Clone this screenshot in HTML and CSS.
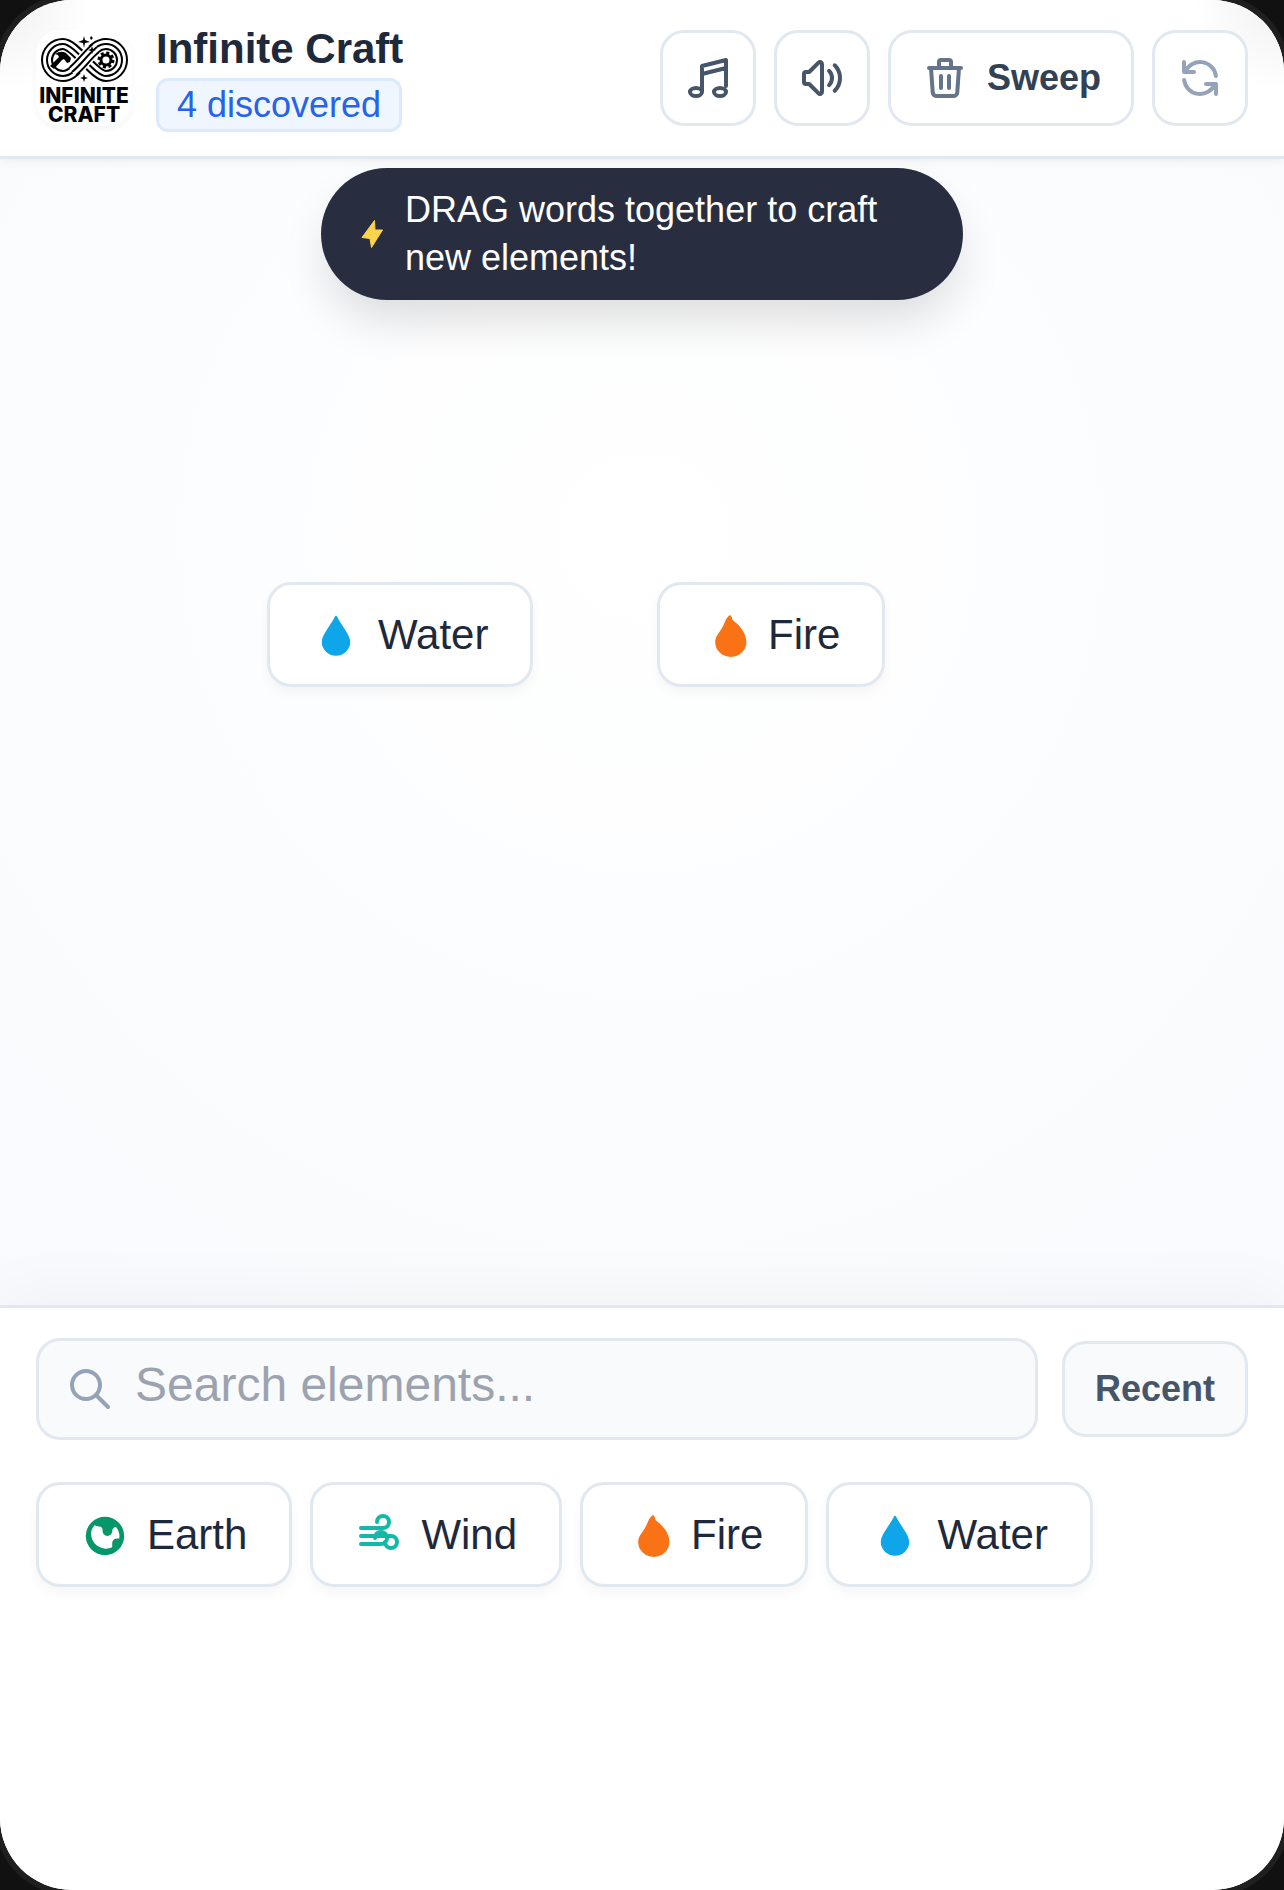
FILE: index.html
```html
<!DOCTYPE html>
<html lang="en">
<head>
    <meta charset="UTF-8">
    <meta name="viewport" content="width=device-width, initial-scale=1.0">
    <title>Infinite Craft</title>
    <link rel="stylesheet" href="styles.css">
</head>
<body>
    <!-- shared element icons -->
    <svg class="sprite" aria-hidden="true">
      <symbol id="icon-water" viewBox="0 0 24 24">
        <path fill="#0ea5e9" d="M12 1.900C11.700 1.900 11.500 2.200 11.300 2.600C9.500 6.500 4.900 11.300 4.900 14.900a7.100 7 0 0 0 14.200 0C19.100 11.300 14.500 6.500 12.700 2.600C12.500 2.200 12.300 1.900 12 1.900z"/>
      </symbol>
      <symbol id="icon-fire" viewBox="0 0 24 24">
        <path fill="#f97316" d="M13.600 1.700C12.300 2.600 11.700 4.300 10.900 6.300C9.600 9.600 6.600 11.700 6.600 15a7.800 7.500 0 0 0 15.600 0C22.200 10.900 19.200 6.900 15.700 4.400C14.900 3.800 15.200 3 14.700 2.200C14.400 1.600 14 1.500 13.600 1.700z"/>
      </symbol>
      <symbol id="icon-earth" viewBox="0 0 20 20">
        <path fill="#059669" fill-rule="evenodd" d="M10 18a8 8 0 1 0 0-16 8 8 0 0 0 0 16zM4.300 8A6 6 0 0 1 5.700 5.400C6.200 5.800 6.900 6 7.500 6A1.500 1.500 0 0 1 9 7.500V8a2 2 0 0 0 4 0 2 2 0 0 1 1.500-1.900A6 6 0 0 1 16 10c0 .3 0 .7-.1 1H15a2 2 0 0 0-2 2v1.700A5.900 5.900 0 0 1 10 15.300C6.500 14.800 3.700 12 4.300 8z"/>
      </symbol>
      <symbol id="icon-wind" viewBox="0 0 24 24">
        <g fill="none" stroke="#14b8a6" stroke-width="2" stroke-linecap="round" stroke-linejoin="round">
          <path d="M3 8h11a3 3 0 1 0-3-3"/>
          <path d="M3 12h15a3 3 0 1 1-3 3"/>
          <path d="M3 16h10a3 3 0 1 0-3-3"/>
        </g>
      </symbol>
    </svg>

    <div class="app">
      <header class="header">
        <div class="brand">
          <svg class="logo" viewBox="0 0 96 96" role="img" aria-label="Infinite Craft logo">
            <!-- infinity band -->
            <g fill="none">
              <path stroke="#000" stroke-width="12" d="M48 30C56 20 62 14 70 14a16 16 0 0 1 0 32C58 46 39 14 27 14a16 16 0 0 0 0 32C35 46 41 39 48 30"/>
              <path stroke="#fff" stroke-width="8" d="M48 30C56 20 62 14 70 14a16 16 0 0 1 0 32C58 46 39 14 27 14a16 16 0 0 0 0 32C35 46 41 39 48 30"/>
              <path stroke="#000" stroke-width="2" d="M48 30C56 20 62 14 70 14a16 16 0 0 1 0 32C58 46 39 14 27 14a16 16 0 0 0 0 32C35 46 41 39 48 30"/>
              <path stroke="#fff" stroke-width="15" d="M40 39L57 20"/>
              <path stroke="#000" stroke-width="12" d="M37 41C45 35 52 24 60 18"/>
              <path stroke="#fff" stroke-width="8" d="M36 42C45 35 52 24 61 17"/>
              <path stroke="#000" stroke-width="2" d="M36 42C45 35 52 24 61 17"/>
            </g>
            <!-- hammer and gear -->
            <path d="M19 24q6-4 11-1l5 5-1 4-3 1-3-4-2 1-8 9-4-3 9-9-1-2z"/>
            <circle cx="70" cy="30" r="5" fill="none" stroke="#000" stroke-width="3"/>
            <circle cx="70" cy="30" r="7" fill="none" stroke="#000" stroke-width="3" stroke-dasharray="3 2.500"/>
            <path d="M48 6l1 4 5 2-5 1-1 5-1-5-5-1 5-2zM55 6l2 2-2 2-1-2zM56 16l1 3 3 1-3 1-1 3-1-3-3-1 3-1zM48 44l1 3 3 1-3 1-1 3-1-3-3-1 3-1z"/>
            <text class="logo-text" x="48" y="73" text-anchor="middle">INFINITE</text>
            <text class="logo-text" x="48" y="92" text-anchor="middle">CRAFT</text>
          </svg>
          <div class="brand-info">
            <h1>Infinite Craft</h1>
            <span class="count">4 discovered</span>
          </div>
        </div>

        <div class="actions">
          <button type="button" class="btn" aria-label="Music">
            <svg class="icon" viewBox="0 0 24 24"><path d="M9 19V6l12-3v13M9 10l12-3M9 19c0 1.100-1.300 2-3 2s-3-.9-3-2 1.300-2 3-2 3 .9 3 2zM21 19c0 1.100-1.300 2-3 2s-3-.9-3-2 1.300-2 3-2 3 .9 3 2z"/></svg>
          </button>
          <button type="button" class="btn" aria-label="Sound">
            <svg class="icon" viewBox="0 0 24 24"><path d="M15.536 8.464a5 5 0 0 1 0 7.072m2.828-9.900a9 9 0 0 1 0 12.728M5.586 15H4a1 1 0 0 1-1-1v-4a1 1 0 0 1 1-1h1.586l4.707-4.707C10.923 3.663 12 4.109 12 5v14c0 .891-1.077 1.337-1.707.707L5.586 15z"/></svg>
          </button>
          <button type="button" class="btn btn-sweep">
            <svg class="icon" viewBox="0 0 24 24" aria-hidden="true"><path d="M19 7l-.867 12.142A2 2 0 0 1 16.138 21H7.862a2 2 0 0 1-1.995-1.858L5 7m5 4v6m4-6v6m1-10V4a1 1 0 0 0-1-1h-4a1 1 0 0 0-1 1v3M4 7h16"/></svg>
            Sweep
          </button>
          <button type="button" class="btn btn-reset" aria-label="Reset">
            <svg class="icon" viewBox="0 0 24 24"><path d="M4 4v5h.582m15.356 2A8.001 8.001 0 0 0 4.582 9m0 0H9m11 11v-5h-.581m0 0a8.003 8.003 0 0 1-15.357-2m15.357 2H15"/></svg>
          </button>
        </div>
      </header>

      <main class="workspace">
        <div class="hint">
          <svg class="hint-icon" viewBox="0 0 30 30" aria-hidden="true"><path fill="#fcd34d" stroke="#fcd34d" stroke-linejoin="round" d="M17.500 1.500L18 11h7.500L14.500 28.500 13 19.500 5 18.500z"/></svg>
          <p>DRAG words together to craft new elements!</p>
        </div>
        <button type="button" class="element placed placed-water"><svg class="icon"><use href="#icon-water"/></svg>Water</button>
        <button type="button" class="element placed placed-fire"><svg class="icon"><use href="#icon-fire"/></svg>Fire</button>
      </main>

      <section class="panel">
        <div class="search-row">
          <div class="search">
            <label for="search" aria-label="Search elements">
              <svg class="icon" viewBox="0 0 24 24"><path d="M21 21l-6-6m2-5a7 7 0 1 1-14 0 7 7 0 0 1 14 0z"/></svg>
            </label>
            <input type="text" id="search" placeholder="Search elements...">
          </div>
          <button type="button" class="btn btn-sort">Recent</button>
        </div>
        <div class="elements">
          <button type="button" class="element"><svg class="icon"><use href="#icon-earth"/></svg>Earth</button>
          <button type="button" class="element"><svg class="icon"><use href="#icon-wind"/></svg>Wind</button>
          <button type="button" class="element"><svg class="icon"><use href="#icon-fire"/></svg>Fire</button>
          <button type="button" class="element"><svg class="icon"><use href="#icon-water"/></svg>Water</button>
        </div>
      </section>
    </div>
</body>
</html>
```
FILE: styles.css
```css
* {
  box-sizing: border-box;
}

body {
  margin: 0;
  background-color: #111;
  color: #1e293b;
  font-family: "Liberation Sans", Arial, sans-serif;
}

h1,
p {
  margin: 0;
}

button,
input {
  font-family: inherit;
}

button {
  cursor: pointer;
}

.sprite {
  position: absolute;
  width: 0;
  height: 0;
}

.app {
  display: flex;
  flex-direction: column;
  height: 100vh;
  overflow: hidden;
  border-radius: 72px;
  background-color: white;
  box-shadow: 0 0 0 6px #1f1f1f;
}

.icon {
  display: block;
  flex: none;
  width: 48px;
  height: 48px;
  fill: none;
  stroke: currentColor;
  stroke-width: 2;
  stroke-linecap: round;
  stroke-linejoin: round;
}

.element .icon {
  margin-top: 3px;
  stroke: none;
}

/* Header */
.header {
  display: flex;
  align-items: center;
  justify-content: space-between;
  z-index: 1;
  padding: 24px 36px;
  border-bottom: 3px solid #e2e8f0;
  background: radial-gradient(circle at 0 0, #f0f0f0, transparent 90px), radial-gradient(circle at 100% 0, #f0f0f0, transparent 90px), white;
  box-shadow: 0 3px 9px rgba(0, 0, 0, 0.05);
}

.brand {
  display: flex;
  align-items: center;
  gap: 24px;
}

.logo {
  width: 96px;
  height: 96px;
  border-radius: 24px;
  background-color: white;
  box-shadow: 0 3px 6px rgba(0, 0, 0, 0.04);
}

.logo-text {
  font-family: Inter, sans-serif;
  font-size: 21px;
  font-weight: 800;
}

.brand-info {
  display: flex;
  flex-direction: column;
  align-items: flex-start;
  gap: 4px;
}

h1 {
  font-size: 42px;
  line-height: 50px;
}

.count {
  padding: 0 18px;
  border: 3px solid #dbeafe;
  border-radius: 12px;
  background-color: #eff6ff;
  color: #2563eb;
  font-size: 36px;
  line-height: 48px;
}

.actions {
  display: flex;
  gap: 18px;
}

.btn {
  display: flex;
  align-items: center;
  gap: 18px;
  padding: 21px;
  border: 3px solid #e2e8f0;
  border-radius: 24px;
  background-color: white;
  color: #475569;
  font-size: 36px;
  font-weight: bold;
  line-height: 48px;
}

.btn-sweep {
  padding: 21px 30px;
  color: #334155;
}

.btn-sweep .icon {
  color: #64748b;
}

.btn-reset {
  color: #94a3b8;
}

/* Workspace */
.workspace {
  position: relative;
  flex: 1;
  background: radial-gradient(circle at 50% 33%, white, #f8fafd);
}

.hint {
  position: absolute;
  top: 9px;
  left: 25%;
  display: flex;
  align-items: center;
  gap: 18px;
  width: 50%;
  padding: 18px 36px;
  border-radius: 66px;
  background-color: #282e40;
  box-shadow: 0 24px 48px -6px rgba(0, 0, 0, 0.14);
  color: white;
  font-size: 36px;
  line-height: 48px;
}

.hint-icon {
  flex: none;
  width: 30px;
  height: 30px;
}

.element {
  display: flex;
  align-items: center;
  gap: 18px;
  padding: 18px 42px;
  border: 3px solid #e2e8f0;
  border-radius: 24px;
  background-color: white;
  box-shadow: 0 6px 12px rgba(0, 0, 0, 0.04);
  color: #1e293b;
  font-size: 42px;
  line-height: 63px;
}

.placed {
  position: absolute;
  top: 423px;
}

.placed-water {
  left: 267px;
}

.placed-fire {
  left: 657px;
}

/* Bottom panel */
.panel {
  display: flex;
  flex: 0 0 585px;
  flex-direction: column;
  gap: 42px;
  z-index: 1;
  padding: 30px 36px;
  border-top: 3px solid #e2e8f0;
  background-color: white;
  box-shadow: 0 -12px 60px rgba(0, 0, 0, 0.04);
}

.search-row {
  display: flex;
  align-items: center;
  gap: 24px;
}

.search {
  position: relative;
  flex: 1;
}

.search label {
  position: absolute;
  top: 27px;
  left: 30px;
  color: #94a3b8;
}

.search input {
  display: block;
  width: 100%;
  padding: 17px 30px 25px 96px;
  border: 3px solid #e2e8f0;
  border-radius: 24px;
  background-color: #f8fafc;
  color: #1e293b;
  font-size: 48px;
  line-height: 54px;
}

.search input::placeholder {
  color: #9ca3af;
}

.btn-sort {
  padding: 21px 30px;
  background-color: #f8fafc;
}

.elements {
  display: flex;
  flex-wrap: wrap;
  gap: 18px;
}
```
